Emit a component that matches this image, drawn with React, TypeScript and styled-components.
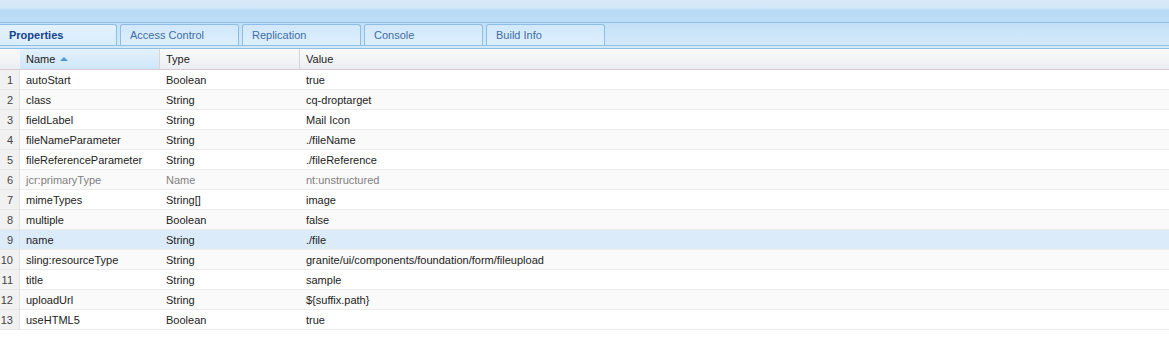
import React from "react";
import styled, { createGlobalStyle } from "styled-components";

const GlobalStyle = createGlobalStyle`
  body {
    margin: 0;
    background: #fff;
    font-family: "Liberation Sans", Arial, sans-serif;
  }
`;

interface Prop {
  name: string;
  type: string;
  value: string;
  protectedProp?: boolean;
}

const props: Prop[] = [
  { name: "autoStart", type: "Boolean", value: "true" },
  { name: "class", type: "String", value: "cq-droptarget" },
  { name: "fieldLabel", type: "String", value: "Mail Icon" },
  { name: "fileNameParameter", type: "String", value: "./fileName" },
  { name: "fileReferenceParameter", type: "String", value: "./fileReference" },
  { name: "jcr:primaryType", type: "Name", value: "nt:unstructured", protectedProp: true },
  { name: "mimeTypes", type: "String[]", value: "image" },
  { name: "multiple", type: "Boolean", value: "false" },
  { name: "name", type: "String", value: "./file" },
  { name: "sling:resourceType", type: "String", value: "granite/ui/components/foundation/form/fileupload" },
  { name: "title", type: "String", value: "sample" },
  { name: "uploadUrl", type: "String", value: "${suffix.path}" },
  { name: "useHTML5", type: "Boolean", value: "true" },
];

const tabs = ["Properties", "Access Control", "Replication", "Console", "Build Info"];

const Page = styled.div`
  width: 1169px;
  height: 354px;
  overflow: hidden;
  background: #fff;
`;

const TopBand = styled.div`
  height: 22px;
  background: linear-gradient(to bottom, #d8e9f8 0px, #d3e7f8 8px, #b7daf5 10px, #bddcf5 22px);
  border-bottom: 1px solid #8ebfe6;
`;

const TabStrip = styled.div`
  height: 22px;
  display: flex;
  align-items: flex-end;
  gap: 3px;
  background: linear-gradient(to bottom, #c4e0f6, #d4e9fa);
  border-bottom: 1px solid #8ebfe6;
`;

const Tab = styled.div<{ $active?: boolean }>`
  width: 119px;
  height: 21px;
  margin-left: ${(p) => (p.$active ? "-2px" : "0")};
  box-sizing: border-box;
  border: 1px solid #8dbde4;
  border-bottom: none;
  border-radius: 3px 3px 0 0;
  background: ${(p) =>
    p.$active
      ? "linear-gradient(to bottom, #e2f1fd, #d9edfc)"
      : "linear-gradient(to bottom, #d1e8fb, #dcefff)"};
  color: ${(p) => (p.$active ? "#15428b" : "#416da3")};
  font-family: "Liberation Sans", Arial, sans-serif;
  font-size: 11px;
  font-weight: ${(p) => (p.$active ? "bold" : "normal")};
  line-height: 21px;
  padding-left: ${(p) => (p.$active ? "10px" : "9px")};
  white-space: nowrap;
`;

const StripGap = styled.div`
  height: 2px;
  background: #d3e8fa;
  border-bottom: 1px solid #8ebfe6;
`;

const Grid = styled.div`
  display: grid;
  grid-template-columns: 20px 140px 140px 1fr;
  font-size: 11px;
  color: #222;
`;

const HeadCell = styled.div<{ $sorted?: boolean; $first?: boolean }>`
  height: 20px;
  line-height: 21px;
  padding-left: 6px;
  background: ${(p) =>
    p.$sorted
      ? "linear-gradient(to bottom, #e3f1fc, #cfe6f8)"
      : "linear-gradient(to bottom, #fbfafa, #eaeef2)"};
  border-bottom: 1px solid #dac9d3;
  border-right: ${(p) => (p.$first ? "none" : "1px solid #d6d6d6")};
  color: #222;
  display: flex;
  align-items: center;
  gap: 5px;
`;

const SortArrow = styled.span`
  width: 0;
  height: 0;
  border-left: 4px solid transparent;
  border-right: 4px solid transparent;
  border-bottom: 4px solid #4a9ad8;
  margin-top: 0;
`;

const NumCell = styled.div<{ $shade: string }>`
  height: 19px;
  line-height: 21px;
  overflow: hidden;
  text-align: right;
  padding-right: 6px;
  color: #444;
  background: ${(p) => p.$shade};
  border-bottom: 1px solid #e6e6e6;
  border-right: 1px solid #e1e1e1;
`;

const Cell = styled.div<{ $shade: string; $dim?: boolean }>`
  height: 19px;
  line-height: 21px;
  overflow: hidden;
  padding-left: 6px;
  white-space: nowrap;
  color: ${(p) => (p.$dim ? "#808080" : "#222")};
  background: ${(p) => p.$shade};
  border-bottom: 1px solid #ececec;
`;

export default function App() {
  return (
    <Page>
      <GlobalStyle />
      <TopBand />
      <TabStrip>
        {tabs.map((t, i) => (
          <Tab key={t} $active={i === 0}>
            {t}
          </Tab>
        ))}
      </TabStrip>
      <StripGap />
      <Grid>
        <HeadCell $first />
        <HeadCell $sorted>
          Name <SortArrow />
        </HeadCell>
        <HeadCell>Type</HeadCell>
        <HeadCell $first>Value</HeadCell>
        {props.map((p, i) => {
          const selected = i === 8;
          const shade = selected ? "#dcebf9" : i % 2 === 1 ? "#fafafa" : "#ffffff";
          const numShade = selected ? "#dcebf9" : "#f1f1f1";
          return (
            <React.Fragment key={p.name}>
              <NumCell $shade={numShade}>{i + 1}</NumCell>
              <Cell $shade={shade} $dim={p.protectedProp}>{p.name}</Cell>
              <Cell $shade={shade} $dim={p.protectedProp}>{p.type}</Cell>
              <Cell $shade={shade} $dim={p.protectedProp}>{p.value}</Cell>
            </React.Fragment>
          );
        })}
      </Grid>
    </Page>
  );
}
